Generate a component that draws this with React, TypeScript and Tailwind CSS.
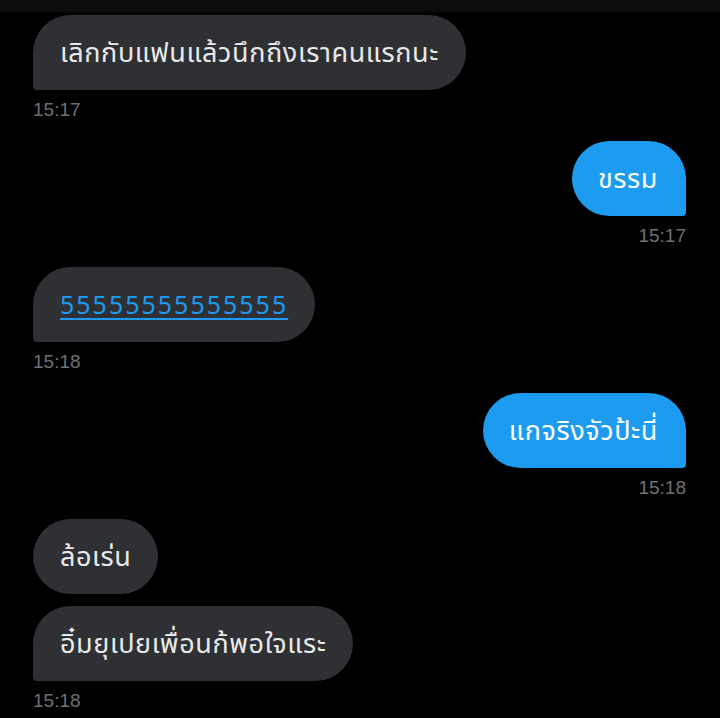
type Msg = {
  side: "in" | "out";
  text: string;
  link?: boolean;
  time?: string;
  grouped?: boolean;
};

const messages: Msg[] = [
  { side: "in", text: "เลิกกับแฟนแล้วนึกถึงเราคนแรกนะ", time: "15:17" },
  { side: "out", text: "ขรรม", time: "15:17" },
  { side: "in", text: "55555555555555", link: true, time: "15:18" },
  { side: "out", text: "แกจริงจัวป้ะนี่", time: "15:18" },
  { side: "in", text: "ล้อเร่น", grouped: true },
  { side: "in", text: "อิ๋มยุเปยเพื่อนก้พอใจแระ", time: "15:18" },
];

const Bubble = ({ msg }: { msg: Msg }) => {
  const isOut = msg.side === "out";
  return (
    <div className={isOut ? "flex flex-col items-end" : "flex flex-col items-start"}>
      <div
        className={
          isOut
            ? "h-[75px] flex items-center pt-[4px] pl-[26px] pr-[28px] bg-[#1d9bf0] text-white rounded-[38px] rounded-br-[4px]"
            : msg.grouped
            ? "h-[75px] flex items-center pt-[4px] px-[27px] bg-[#2f3033] text-[#e7e9ea] rounded-[38px]"
            : "h-[75px] flex items-center pt-[4px] px-[27px] bg-[#2f3033] text-[#e7e9ea] rounded-[38px] rounded-bl-[4px]"
        }
      >
        {msg.link ? (
          <span className="text-[25px] text-[#1d9bf0] underline underline-offset-[4px] tracking-[2px]">{msg.text}</span>
        ) : (
          <span className="text-[27px] tracking-[0.6px]">{msg.text}</span>
        )}
      </div>
      {msg.time && (
        <div className="mt-[8px] h-[24px] leading-[24px] text-[19px] text-[#6e7074] font-['Liberation_Sans',sans-serif]">
          {msg.time}
        </div>
      )}
    </div>
  );
};

const App = () => {
  return (
    <div className="w-[720px] h-[718px] overflow-hidden bg-black font-['Noto_Sans_Thai','Noto_Sans','Liberation_Sans',sans-serif]">
      <div className="h-[12px] bg-[#0d0d0d]" />
      <div className="pl-[33px] pr-[34px] pt-[3px] flex flex-col">
        {messages.map((m, i) => (
          <div key={i} className={m.grouped ? "mb-[12px]" : "mb-[19px]"}>
            <Bubble msg={m} />
          </div>
        ))}
      </div>
    </div>
  );
};

export default App;
